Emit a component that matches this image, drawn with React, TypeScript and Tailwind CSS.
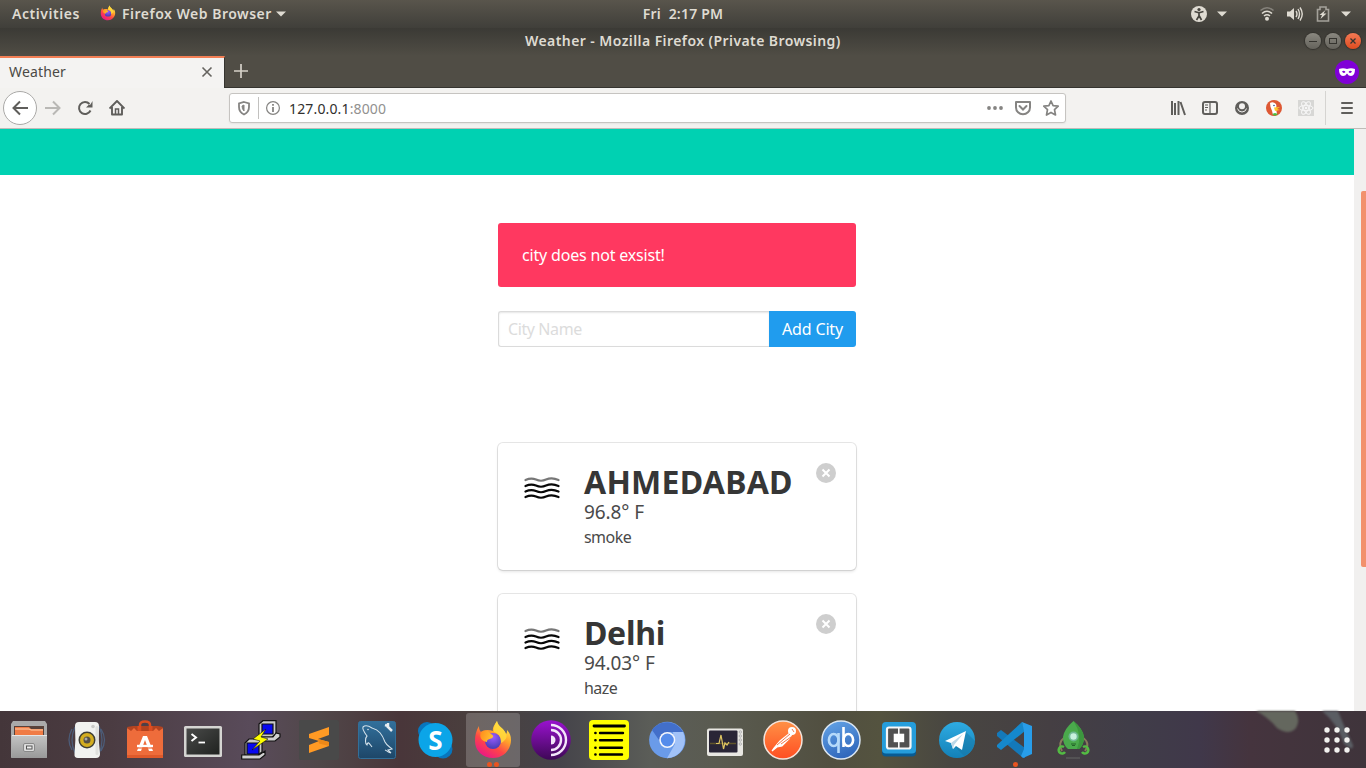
import React from "react";

type IconProps = { children: React.ReactNode; size?: number; className?: string };

function Glyph({ children, size = 16, className = "" }: IconProps) {
  return (
    <svg width={size} height={size} viewBox={`0 0 ${size} ${size}`} className={`shrink-0 ${className}`} fill="none">
      {children}
    </svg>
  );
}

function FirefoxArt() {
  return (
    <>
      <defs>
        <linearGradient id="ffBody" x1="0.85" y1="0.05" x2="0.25" y2="1">
          <stop offset="0" stopColor="#fff44f" />
          <stop offset="0.35" stopColor="#ffa52a" />
          <stop offset="0.65" stopColor="#ff4547" />
          <stop offset="1" stopColor="#e8158b" />
        </linearGradient>
        <radialGradient id="ffGlobe" cx="0.5" cy="0.25" r="0.7">
          <stop offset="0" stopColor="#9a5cff" />
          <stop offset="1" stopColor="#4a3fb8" />
        </radialGradient>
        <linearGradient id="ffFox" x1="0" y1="0" x2="1" y2="0.3">
          <stop offset="0" stopColor="#ff8a1c" />
          <stop offset="1" stopColor="#ffc02e" />
        </linearGradient>
      </defs>
      <path d="M24 1C22 4 19 8 20 11C15 9 10 10 8 12C6 10 6 8 6 6C3 11 2 15 2 21C2 31 10 38 20 38C30 38 38 30 38 20C38 15 36 12 34 10C34 12 34 13 33 14C31 8 25 7 24 1Z" fill="url(#ffBody)" />
      <circle cx="20" cy="21" r="8" fill="url(#ffGlobe)" />
      <path d="M8 12C11 10 14 10 16 12C17 14 21 15 20 17C18 20 14 18 14 22C8 21 6 17 8 12Z" fill="url(#ffFox)" />
      <path d="M24 1C22 5 20 8 21 12C27 14 28 18 28 23C32 21 35 17 33 14C31 8 25 7 24 1Z" fill="#ffdc3d" opacity="0.8" />
    </>
  );
}

function FilesIcon() {
  return (
    <>
      <defs>
        <linearGradient id="cab" x1="0" y1="0" x2="0" y2="1">
          <stop offset="0" stopColor="#c4c4c4" />
          <stop offset="1" stopColor="#999" />
        </linearGradient>
      </defs>
      <path d="M4 1H36L38 4V37Q38 38 37 38H3Q2 38 2 37V4Z" fill="#aaa" />
      <path d="M5 6H35V16H5Z" fill="#59423a" />
      <path d="M6 7H20L22 9H34V16H6Z" fill="#f07b45" />
      <path d="M6 9H20L22 10H34" stroke="#ffd0a8" />
      <rect x="2.500" y="15" width="35.500" height="23" rx="1" fill="url(#cab)" />
      <path d="M3 15.500H38" stroke="#e5e5e5" />
      <rect x="14.500" y="23.500" width="11" height="8" rx="1.500" fill="#ddd" stroke="#888" />
      <rect x="17.500" y="26" width="5.500" height="3" fill="#eee" stroke="#555" />
    </>
  );
}

function SpeakerIcon() {
  return (
    <>
      <path d="M5 9Q-1 20 5 30M8 7Q2 20 8 33M34 9Q41 20 34 31M32 6Q38 20 32 34" stroke="#4c5c78" strokeWidth="1.300" />
      <path d="M12 2H28Q32 2 32 6Q31 20 33 34Q33 38 29 38H11Q7 38 7.500 34Q9 20 8 6Q8 2 12 2Z" fill="#f1f2f0" />
      <rect x="28.500" y="6" width="3" height="29" rx="1.500" fill="#dfe0dd" />
      <circle cx="20" cy="20" r="8.500" fill="#3e3e35" />
      <circle cx="20" cy="20" r="7" fill="#d3ad20" />
      <circle cx="20" cy="20" r="3.500" fill="#555046" />
      <circle cx="19" cy="19" r="1.500" fill="#aaa" />
      <circle cx="26" cy="6.500" r="1.800" fill="#c9cac8" />
    </>
  );
}

function SoftwareIcon() {
  return (
    <>
      <path d="M2 7L8 6H33L38 7L36 11H4Z" fill="#b34320" />
      <path d="M15 11V5Q15 1.500 20 1.500Q25 1.500 25 5V11" stroke="#dc4d20" strokeWidth="2.500" />
      <path d="M2 8L6 11L9 8L12 11H28L31 8L34 11L38 8V38H2Z" fill="#ee6c3b" />
      <path d="M2 35H38V38H2Z" fill="#df5a2b" />
      <path d="M13.500 11V6M26.500 11V6" stroke="#dc4d20" strokeWidth="2" />
      <path d="M18 16H22L28 31H24L20 20L16 31H12Z" fill="#fff" />
      <path d="M12 26H28" stroke="#fff" strokeWidth="2.400" />
      <path d="M13 28H27" stroke="#ee6c3b" strokeWidth="1.200" />
    </>
  );
}

function TerminalIcon() {
  return (
    <>
      <defs>
        <linearGradient id="term" x1="0" y1="0" x2="1" y2="1">
          <stop offset="0" stopColor="#494a49" />
          <stop offset="1" stopColor="#202220" />
        </linearGradient>
      </defs>
      <rect x="1" y="6" width="38" height="31" rx="1.500" fill="#d5d5d2" />
      <rect x="3.500" y="8.500" width="33" height="26" fill="url(#term)" />
      <path d="M8.500 14L13 17.500L8.500 21" stroke="#fff" strokeWidth="2" />
      <path d="M15.500 22.500H22" stroke="#fff" strokeWidth="1.800" />
    </>
  );
}

function PuttyIcon() {
  return (
    <g stroke="#111" strokeWidth="1.200">
      <path d="M18 4L22 0.700H35V14L31 17H18Z" fill="#c8c8c8" />
      <path d="M21 4H32V14H21Z" fill="#0808ef" />
      <path d="M18 17H32L35 13L39 14V17L34 21H18Z" fill="#d0d0d0" />
      <path d="M4 23L8 19H21V32L17 35H4Z" fill="#c8c8c8" />
      <path d="M6 23H18V34H6Z" fill="#0808ef" />
      <path d="M0.700 35H18L24 31V35L19 39H0.700Z" fill="#d0d0d0" />
      <path d="M25 9L12 19L19 21L11 30L27 19L20 17Z" fill="#ffff00" strokeWidth="0.600" />
    </g>
  );
}

function SublimeIcon() {
  return (
    <>
      <rect width="40" height="40" rx="2" fill="#494949" />
      <path d="M10 14L30 7V15L19 19L30 22V26L10 33V25L20 21L10 18Z" fill="#ff9a24" />
      <path d="M19 19L30 22V26L20 23.500Z" fill="#ed8818" />
    </>
  );
}

function MysqlIcon() {
  return (
    <>
      <defs>
        <linearGradient id="sqlbg" x1="0" y1="0" x2="0" y2="1">
          <stop offset="0" stopColor="#32709c" />
          <stop offset="1" stopColor="#1d4668" />
        </linearGradient>
      </defs>
      <rect x="1.500" y="1.500" width="37" height="37" rx="2" fill="url(#sqlbg)" stroke="#326f99" />
      <path d="M15 27C12 23 11 21 10 25C8 24 8 18 10 16C7 12 5 9 6 7C8 5 12 6 15 8C22 10 25 14 28 22C30 26 33 27 35 29L31 30L34 33M28 30C31 31 31 33 34 33" stroke="#d3e1ea" strokeWidth="1.100" />
      <path d="M30 6L35 11M28 5L31 6L31 3" stroke="#e7edf1" strokeWidth="2.500" />
      <circle cx="11" cy="9.500" r="0.800" fill="#d3e1ea" />
    </>
  );
}

function SkypeIcon() {
  return (
    <>
      <circle cx="12" cy="11" r="9" fill="#0876bd" />
      <circle cx="28" cy="29" r="9.500" fill="#0876bd" />
      <circle cx="20.500" cy="20" r="17" fill="#0ba5e8" />
      <text x="20.500" y="29.500" textAnchor="middle" fontFamily="Noto Sans, sans-serif" fontWeight="700" fontSize="26" fill="#fff">S</text>
    </>
  );
}

function TorIcon() {
  return (
    <>
      <defs>
        <linearGradient id="torbg" x1="0" y1="0" x2="0" y2="1">
          <stop offset="0" stopColor="#9a12cf" />
          <stop offset="1" stopColor="#3e0856" />
        </linearGradient>
      </defs>
      <circle cx="20" cy="20" r="19.800" fill="url(#torbg)" />
      <path d="M20 5A15 15 0 0 1 20 35M20 10A10 10 0 0 1 20 30" stroke="#f3e6fa" strokeWidth="2.400" />
      <path d="M20 15.500A4.500 4.500 0 0 1 20 24.500Z" fill="#f3e6fa" />
    </>
  );
}

function NotesIcon() {
  return (
    <>
      <rect width="40" height="40" rx="4" fill="#ffff00" />
      <path d="M5 6H35.500" stroke="#000" strokeWidth="2.800" strokeLinecap="round" />
      <path d="M11 13H34M11 20.300H33M11 27.700H33M11 34.500H33" stroke="#000" strokeWidth="2.400" strokeLinecap="round" />
      <path d="M6.400 13H6.500M6.400 20.300H6.500M6.400 27.700H6.500M6.400 34.500H6.500" stroke="#000" strokeWidth="2.600" strokeLinecap="round" />
    </>
  );
}

function ChromiumIcon() {
  return (
    <>
      <circle cx="20.300" cy="20" r="18.200" fill="#6a9be9" />
      <path d="M5 10A18.200 18.200 0 0 1 36 12H20L12 20Z" fill="#426fca" />
      <path d="M36 12A18.200 18.200 0 0 1 20 38.200L28 24L26 12Z" fill="#a1c2f8" />
      <circle cx="20.300" cy="20" r="8" fill="#f4f6fc" />
      <circle cx="20.300" cy="20" r="6.500" fill="#558ceb" />
    </>
  );
}

function MonitorIcon() {
  return (
    <>
      <rect x="2" y="8.500" width="36" height="27.500" rx="2" fill="#e8e7e2" />
      <rect x="4" y="10.500" width="28.500" height="22" rx="1" fill="#292536" />
      <path d="M5 23.500H31" stroke="#61552c" strokeWidth="1.500" />
      <path d="M11 23.500H14L16 15L18.500 29L20 23L22 25L24 22" stroke="#dfc562" strokeWidth="1.200" />
      {[12, 16, 20, 24].map((y) => (
        <circle key={y} cx="35.300" cy={y} r="1.200" fill="#eee" stroke="#999" strokeWidth="0.700" />
      ))}
    </>
  );
}

function PostmanIcon() {
  return (
    <>
      <defs>
        <linearGradient id="pm" x1="0" y1="0" x2="0" y2="1">
          <stop offset="0" stopColor="#ff9146" />
          <stop offset="1" stopColor="#ff4e22" />
        </linearGradient>
      </defs>
      <circle cx="20" cy="20" r="19" fill="url(#pm)" stroke="#f4e4dc" strokeWidth="1.500" />
      <circle cx="29" cy="11" r="4" fill="#fff" />
      <path d="M27 13L17 21L11 28L9 31L14 27L19 26L26 19L29 14Z" fill="#fff" stroke="#fff" strokeWidth="1.200" />
      <path d="M27 14L14 25M28 17L18 24M29 9L31 12" stroke="#f26a38" strokeWidth="0.900" />
    </>
  );
}

function QbIcon() {
  return (
    <>
      <defs>
        <linearGradient id="qb" x1="0" y1="0" x2="0.400" y2="1">
          <stop offset="0" stopColor="#66a6e8" />
          <stop offset="1" stopColor="#3169bd" />
        </linearGradient>
      </defs>
      <circle cx="20" cy="20" r="19" fill="url(#qb)" stroke="#dce7f3" strokeWidth="1.500" />
      <g strokeWidth="2.600">
        <ellipse cx="12.700" cy="20" rx="4.800" ry="6" stroke="#b6dafa" />
        <path d="M17.500 13V33" stroke="#b6dafa" />
        <ellipse cx="27.300" cy="20" rx="4.800" ry="6" stroke="#fff" />
        <path d="M22.500 7V27" stroke="#fff" />
      </g>
    </>
  );
}

function BracketsIcon() {
  return (
    <>
      <rect x="3" y="4" width="34" height="32.500" rx="4" fill="#085b93" />
      <rect x="3" y="2" width="34" height="31.500" rx="4" fill="#259ddb" />
      <rect x="8" y="7.500" width="23.500" height="21" rx="2" fill="#515151" stroke="#f7f7f7" strokeWidth="2.200" />
      <path d="M19.800 8V28" stroke="#f7f7f7" strokeWidth="1.600" />
      <rect x="14.700" y="13.700" width="10.500" height="8.500" fill="#fff" />
    </>
  );
}

function TelegramIcon() {
  return (
    <>
      <defs>
        <linearGradient id="tg" x1="0" y1="0" x2="0" y2="1">
          <stop offset="0" stopColor="#2eabe2" />
          <stop offset="1" stopColor="#1381b8" />
        </linearGradient>
      </defs>
      <circle cx="20" cy="20" r="18" fill="url(#tg)" />
      <path d="M28 11L38 21Q37 31 27 36L18 27Z" fill="#16749f" opacity="0.450" />
      <path d="M8 21L29 11L25 30L19 26L16 29L14 23Z" fill="#fff" />
      <path d="M14 23L26 14L17 25L16 29Z" fill="#bcd8e8" />
    </>
  );
}

function CodeIcon() {
  return (
    <>
      <path d="M2 13L6 10L30 28V38L27 37L2 16Z" fill="#1479ba" />
      <path d="M2 25L27 2L30 11L6 30L2 27Z" fill="#1588cc" />
      <path d="M27 2L37 6V34L28 38L26 36L29 29V11Z" fill="#289de9" />
    </>
  );
}

function RocketIcon() {
  return (
    <>
      <path d="M12 17Q4 23 9 31M29 17Q38 23 32 31" stroke="#887a5c" strokeWidth="2" />
      <path d="M20.500 1Q11 9 10 17Q10 25 15 29H26Q31 25 31 17Q30 9 20.500 1Z" fill="#4aaa4c" />
      <path d="M20.500 1Q30 9 31 17Q31 25 26 29H24Q30 15 20.500 1Z" fill="#3c963e" />
      <circle cx="20.500" cy="16.500" r="5" fill="#6fb893" />
      <circle cx="20.500" cy="16.500" r="3.200" fill="#c7f1df" />
      <path d="M18 24H23M19 25.500H22" stroke="#24652a" strokeWidth="1.200" />
      <path d="M11 27A3.500 3.500 0 1 0 12 32M30 27A3.500 3.500 0 1 1 29 32" stroke="#53bb43" strokeWidth="2.500" />
      <path d="M13 38H27" stroke="#606060" strokeWidth="1.200" />
    </>
  );
}

const dockApps: { name: string; Art: () => React.ReactElement; marks?: number; active?: boolean }[] = [
  { name: "files", Art: FilesIcon },
  { name: "speaker", Art: SpeakerIcon },
  { name: "software", Art: SoftwareIcon },
  { name: "terminal", Art: TerminalIcon },
  { name: "putty", Art: PuttyIcon },
  { name: "sublime", Art: SublimeIcon },
  { name: "mysql", Art: MysqlIcon },
  { name: "skype", Art: SkypeIcon },
  { name: "firefox", Art: FirefoxArt, marks: 2, active: true },
  { name: "tor", Art: TorIcon },
  { name: "notes", Art: NotesIcon },
  { name: "chromium", Art: ChromiumIcon },
  { name: "monitor", Art: MonitorIcon },
  { name: "postman", Art: PostmanIcon },
  { name: "qbittorrent", Art: QbIcon },
  { name: "brackets", Art: BracketsIcon },
  { name: "telegram", Art: TelegramIcon },
  { name: "code", Art: CodeIcon, marks: 1 },
  { name: "rocket", Art: RocketIcon },
];

function Caret() {
  return (
    <svg width="10" height="6" viewBox="0 0 10 6" className="shrink-0">
      <path d="M0 0.500H10L5 5.500Z" fill="#dfdbd2" />
    </svg>
  );
}

function TopBar() {
  return (
    <div className="grid h-7 grid-cols-[1fr_auto_1fr] items-center bg-linear-to-b from-[#59554c] to-[#403f3a] text-[14px] leading-5 font-semibold text-[#dfdbd2]">
      <div className="flex items-center pl-3">
        <span className="w-[88px] whitespace-nowrap tracking-[0.55px]">Activities</span>
        <svg width="16" height="16" viewBox="0 0 40 40" className="mb-0.5"><FirefoxArt /></svg>
        <span className="ml-1.5 w-[154px] whitespace-nowrap tracking-[0.5px]">Firefox Web Browser</span>
        <Caret />
      </div>
      <span className="-mt-px tracking-[0.2px] whitespace-pre">Fri  2:17 PM</span>
      <div className="flex items-center justify-end pr-[15px]">
        <Glyph className="-mt-px">
          <circle cx="8" cy="8" r="8" fill="#dfdbd2" />
          <circle cx="8" cy="3.500" r="1.600" fill="#46443e" />
          <path d="M3.500 5.500L7 6.500H9L12.500 5.500M8 6.500V10L5.500 14M8 9.500L10.500 14" stroke="#46443e" strokeWidth="1.700" />
        </Glyph>
        <div className="mr-[32px] ml-2.5"><Caret /></div>
        <Glyph className="mr-3">
          <path d="M1.500 4.500Q8 -1 14.500 4.500" stroke="#85827b" strokeWidth="1.600" />
          <path d="M3 7.500Q8 3 13 7.500M5 10Q8 7.500 11 10" stroke="#dfdbd2" strokeWidth="1.600" />
          <circle cx="8" cy="12.800" r="2" fill="#dfdbd2" />
        </Glyph>
        <Glyph className="mr-3 -mt-px">
          <path d="M0 5.500H3L7 2V14L3 10.500H0Z" fill="#dfdbd2" />
          <path d="M9 5Q11 8 9 11M11 3Q14 8 11 13M13 1.500Q17.500 8 13 14.500" stroke="#dfdbd2" strokeWidth="1.400" />
        </Glyph>
        <Glyph className="mr-[10px] -mt-px">
          <path d="M3 3.500H5V1H11V3.500H13.500V15H2.500V3.500Z" stroke="#a4a19a" strokeWidth="1.600" />
          <path d="M10.500 4L4.500 9H7L5.500 13L11.500 7.500H8.500Z" fill="#dfdbd2" />
        </Glyph>
        <Caret />
      </div>
    </div>
  );
}

function WindowButton({ kind }: { kind: "min" | "max" | "close" }) {
  const bg = kind === "close" ? "bg-linear-to-b from-[#f37953] to-[#df4b1d]" : "bg-linear-to-b from-[#8a8880] to-[#65635c]";
  return (
    <span className={`flex size-4 items-center justify-center rounded-full shadow-[0_0_1px_1px_#34332e] ${bg}`}>
      <Glyph size={10}>
        {kind === "min" && <path d="M1 5.500H9" stroke="#35342f" />}
        {kind === "max" && <rect x="1.500" y="2.500" width="7" height="5" stroke="#35342f" />}
        {kind === "close" && <path d="M2.500 2.500L7.500 7.500M7.500 2.500L2.500 7.500" stroke="#35342f" strokeWidth="1.300" />}
      </Glyph>
    </span>
  );
}

function TitleBar() {
  return (
    <div className="grid h-7 grid-cols-[1fr_auto_1fr] items-center bg-linear-to-b from-[#3b3a35] to-[#504d45] text-[14px] font-semibold text-[#dfdbd2]">
      <span />
      <span className="-mt-[3px] w-[316px] tracking-[0.42px] whitespace-nowrap">Weather - Mozilla Firefox (Private Browsing)</span>
      <div className="flex items-center justify-end gap-1 pr-[5px] pb-[3px]">
        <WindowButton kind="min" />
        <WindowButton kind="max" />
        <WindowButton kind="close" />
      </div>
    </div>
  );
}

function TabStrip() {
  return (
    <div className="flex h-8 border-b border-[#35342f] bg-[#504d45]">
      <div className="-mb-px flex h-8 w-[225px] items-center justify-between border-t-2 border-r border-t-[#f37f55] border-r-[#35342f] bg-[#f4f3f2] pr-[11px] pb-0.5 pl-[9px]">
        <span className="-mt-px text-[14px] tracking-[0.15px] text-[#4b4945]">Weather</span>
        <Glyph size={12}><path d="M1.500 1.500L10.500 10.500M10.500 1.500L1.500 10.500" stroke="#65635f" strokeWidth="1.600" /></Glyph>
      </div>
      <Glyph size={14} className="mt-2 ml-[9px]"><path d="M7 0V14M0 7H14" stroke="#d5d1c8" strokeWidth="1.700" /></Glyph>
      <div className="mt-1 mr-[7px] ml-auto flex size-6 items-center justify-center rounded-full bg-[#8000d7]">
        <Glyph>
          <path fillRule="evenodd" d="M0 5Q4 3.500 8 5Q12 3.500 16 5Q16 12 12 12Q9.500 12 8 9.500Q6.500 12 4 12Q0 12 0 5ZM3 7.500Q4.500 10 6.500 8Q5 6 3 7.500ZM13 7.500Q11 6 9.500 8Q11.500 10 13 7.500Z" fill="#fff" />
        </Glyph>
      </div>
    </div>
  );
}

function Toolbar() {
  return (
    <div className="flex h-[41px] items-center border-b border-[#bfbcb8] bg-[#f3f2f0] pl-[3px] text-[#5f5e5b]">
      <span className="flex size-[34px] shrink-0 items-center justify-center rounded-full border border-[#aaa9a7] bg-white">
        <Glyph><path d="M8 1.500L1.500 8L8 14.500M1.500 8H16" stroke="currentColor" strokeWidth="2" /></Glyph>
      </span>
      <Glyph className="ml-2 text-[#b9b8b5]"><path d="M8 1.500L14.500 8L8 14.500M14.500 8H0" stroke="currentColor" strokeWidth="2" /></Glyph>
      <Glyph className="ml-4">
        <path d="M13.500 10.500A6 6 0 1 1 12.500 4" stroke="currentColor" strokeWidth="2" />
        <path d="M15.500 1V7.500H9L11.500 5L13.500 4.500Z" fill="currentColor" />
      </Glyph>
      <Glyph className="ml-4">
        <path d="M0.500 8.500L8 1L15.500 8.500M3 7V14.500H13V7" stroke="currentColor" strokeWidth="1.900" strokeLinejoin="round" />
        <path d="M6.500 14V9H9.500V14" stroke="currentColor" strokeWidth="1.500" />
      </Glyph>
      <div className="ml-[104px] flex h-[30px] w-[837px] shrink-0 items-center rounded-[3px] border border-[#c6c4c1] bg-white pl-[6px] text-[#858482] shadow-[0_1px_2px_rgba(0,0,0,0.06)]">
        <Glyph>
          <path d="M8 2L13 3.500V7Q13 12 8 14.500Q3 12 3 7V3.500Z" stroke="currentColor" strokeWidth="1.800" />
          <path d="M8 5V11Q6 9 6 6Z" fill="currentColor" stroke="currentColor" />
        </Glyph>
        <span className="ml-1.5 h-[22px] w-px bg-[#c2c1bf]" />
        <Glyph className="ml-1.5">
          <circle cx="8" cy="8" r="6.400" stroke="currentColor" strokeWidth="1.200" />
          <path d="M8 7V12M8 4V5.700" stroke="currentColor" strokeWidth="1.800" />
        </Glyph>
        <span className="ml-2 text-[14px] tracking-[0.15px] whitespace-nowrap text-[#92918f]"><span className="text-[#31302e]">127.0.0.1</span>:8000</span>
        <div className="ml-auto flex items-center gap-3 pr-[6px]">
          <Glyph><circle cx="2" cy="8" r="1.900" fill="currentColor" /><circle cx="8" cy="8" r="1.900" fill="currentColor" /><circle cx="14" cy="8" r="1.900" fill="currentColor" /></Glyph>
          <Glyph><path d="M1 2H15V7.500A7 6.800 0 0 1 1 7.500Z" stroke="currentColor" strokeWidth="2" strokeLinejoin="round" /><path d="M4.500 6L8 9.500L11.500 6" stroke="currentColor" strokeWidth="2" strokeLinecap="round" /></Glyph>
          <Glyph><path d="M8 1L10.100 5.700L15.200 6.200L11.500 9.700L12.500 15L8 12.400L3.500 15L4.500 9.700L0.800 6.200L5.900 5.700Z" stroke="currentColor" strokeWidth="1.700" strokeLinejoin="round" /></Glyph>
        </div>
      </div>
      <div className="ml-auto flex items-center gap-4">
        <Glyph><path d="M2 1V15M5 3V15M8.500 1V15M10.500 2L15 15" stroke="currentColor" strokeWidth="2" /></Glyph>
        <Glyph><rect x="1" y="2" width="14" height="12" rx="2" stroke="currentColor" strokeWidth="2" /><path d="M8 2V14M3 5H6M3 7.500H6M3 10H5" stroke="currentColor" strokeWidth="1.200" /></Glyph>
        <Glyph><circle cx="8" cy="8" r="7" fill="currentColor" /><circle cx="8" cy="6.200" r="3" fill="#f3f2f0" /><path d="M3.500 8.500Q4.500 12 8 12Q11.500 12 12.500 8.500" stroke="#f3f2f0" strokeWidth="1" /></Glyph>
        <Glyph>
          <circle cx="8" cy="8" r="8" fill="#de5833" />
          <path d="M4 3Q7 1 10 4Q11 6 10 9L11 14L7 15Q6 10 4.500 7Z" fill="#fff" />
          <path d="M8 7.500L14 7L11 9L14 10L9 11Z" fill="#ffc72c" />
          <path d="M6 14L9 13L12 14L9 16Z" fill="#4cba3c" /><circle cx="8" cy="5.500" r="0.800" fill="#2d4f8e" />
        </Glyph>
        <Glyph>
          <rect width="16" height="16" fill="#d7d7d5" />
          <g stroke="#f7f7f7"><ellipse cx="8" cy="8" rx="7" ry="2.700" /><ellipse cx="8" cy="8" rx="7" ry="2.700" transform="rotate(60 8 8)" /><ellipse cx="8" cy="8" rx="7" ry="2.700" transform="rotate(120 8 8)" /></g>
          <circle cx="8" cy="8" r="1.300" fill="#f7f7f7" />
        </Glyph>
      </div>
      <span className="ml-[11px] h-[34px] w-px bg-[#d5d4d1]" />
      <Glyph className="mr-[11px] ml-[13px]"><path d="M3 3H13M3 8H13M3 13H13" stroke="currentColor" strokeWidth="2" strokeLinecap="round" /></Glyph>
    </div>
  );
}

function MistIcon() {
  return (
    <svg width="36" height="22" viewBox="0 0 36 22" fill="none" className="mt-[14px] ml-[6px] shrink-0" strokeWidth="2.200" strokeLinecap="round">
      <path d="M1.500 3Q7 0.500 12 2.500Q17 5 22 2.500Q28 0 34.500 3" stroke="#777" />
      <path d="M1.500 9Q7 6.500 12 8.500Q17 11 22 8.500Q28 6 34.500 9M1.500 14.500Q7 12 12 14Q17 16.500 22 14Q28 11.500 34.500 14.500M1.500 20Q7 17.500 12 19.500Q17 22 22 19.500Q28 17 34.500 20" stroke="#080808" />
    </svg>
  );
}

function CityCard({ city, temperature, summary, cityClass }: { city: string; temperature: string; summary: string; cityClass: string }) {
  return (
    <div className="mb-6 flex h-[127px] rounded-[5px] bg-white p-5 shadow-[0_2px_3px_rgba(10,10,10,0.1),0_0_0_1px_rgba(10,10,10,0.1)]">
      <MistIcon />
      <div className="ml-[24px] flex-1 whitespace-nowrap text-[#4a4a4a]">
        <div className={`h-[37px] leading-[37px] font-bold text-[#363636] ${cityClass}`}>{city}</div>
        <div className="h-[25px] text-[19px] leading-[25px] tracking-[-0.1px]">{temperature}</div>
        <div className="h-[24px] text-[16px] leading-[24px] tracking-[-0.55px]">{summary}</div>
      </div>
      <span className="flex size-5 shrink-0 items-center justify-center rounded-full bg-[#cecece]">
        <Glyph size={10}><path d="M1.500 1.500L8.500 8.500M8.500 1.500L1.500 8.500" stroke="#fff" strokeWidth="2" /></Glyph>
      </span>
    </div>
  );
}

function WeatherPage() {
  return (
    <div className="flex h-[582px] overflow-hidden bg-white">
      <div className="flex-1">
        <div className="h-[46px] bg-[#00d1b2]" />
        <div className="mx-auto mt-12 w-[358px]">
          <div className="flex h-16 items-center rounded-[3px] bg-[#ff3860] px-6 text-[16px] tracking-[-0.18px] text-white">city does not exsist!</div>
          <div className="mt-6 mb-24 flex h-9">
            <input placeholder="City Name" className="w-[271px] rounded-l-[3px] border border-r-0 border-[#dbdbdb] px-[9px] text-[16px] tracking-[-0.4px] shadow-[inset_0_1px_2px_rgba(10,10,10,0.1)] outline-none placeholder:text-[#dcdcdc]" />
            <button className="flex-1 rounded-r-[3px] bg-[#209cee] text-[16px] tracking-[-0.15px] whitespace-nowrap text-white">Add City</button>
          </div>
          <CityCard city="AHMEDABAD" temperature="96.8° F" summary="smoke" cityClass="text-[32px] tracking-[0.25px]" />
          <CityCard city="Delhi" temperature="94.03° F" summary="haze" cityClass="text-[32px] tracking-[-0.3px]" />
        </div>
      </div>
      <div className="flex w-3 justify-end bg-[#f1f0ef] pt-[62px]">
        <div className="h-[376px] w-[5px] rounded-l-[2px] bg-[#f2916d]" />
      </div>
    </div>
  );
}

function Dock() {
  return (
    <div className="relative flex h-[57px] bg-[linear-gradient(90deg,#44363a_0px,#4b3c42_110px,#594b5a_250px,#514749_320px,#49363a_400px,#4a403e_480px,#45444a_560px,#5b5d58_650px,#5a5b50_720px,#514f40_830px,#54533f_880px,#484641_950px,#453f43_1050px,#403d48_1130px,#40384a_1200px,#45343e_1250px,#3f343b_1366px)]">
      <svg width="110" height="57" className="absolute top-0 right-0 blur-[1px]" fill="none">
        <path d="M0 0H39Q45 9 40 17Q33 25 21 17Q12 6 0 0Z" fill="#64675e" />
        <path d="M66 0H82Q89 18 97 34Q98 41 88 33Q82 13 66 0Z" fill="#5a5d63" />
      </svg>
      {dockApps.map(({ name, Art, marks = 0, active }) => (
        <div key={name} className={`relative mx-0.5 mt-0.5 flex h-[54px] w-[54px] shrink-0 justify-center rounded-[3px] pt-[7px] ${active ? "bg-white/20" : ""}`}>
          <svg width="40" height="40" viewBox="0 0 40 40" fill="none"><Art /></svg>
          <div className="absolute inset-x-0 bottom-0 flex justify-center gap-[2px]">
            {Array.from({ length: marks }, (_, i) => <span key={i} className="size-[5px] rounded-full bg-[#e95420]" />)}
          </div>
        </div>
      ))}
      <svg width="28" height="28" viewBox="0 0 28 28" className="relative mt-[15px] mr-[15px] ml-auto">
        {[4, 14, 24].map((y) => [4, 14, 24].map((x) => <circle key={`${x}-${y}`} cx={x} cy={y} r="2.700" fill="#f2f1ef" />))}
      </svg>
    </div>
  );
}

export default function App() {
  return (
    <div className="h-[768px] w-[1366px] overflow-hidden font-['Noto_Sans',sans-serif]">
      <TopBar />
      <TitleBar />
      <TabStrip />
      <Toolbar />
      <WeatherPage />
      <Dock />
    </div>
  );
}
